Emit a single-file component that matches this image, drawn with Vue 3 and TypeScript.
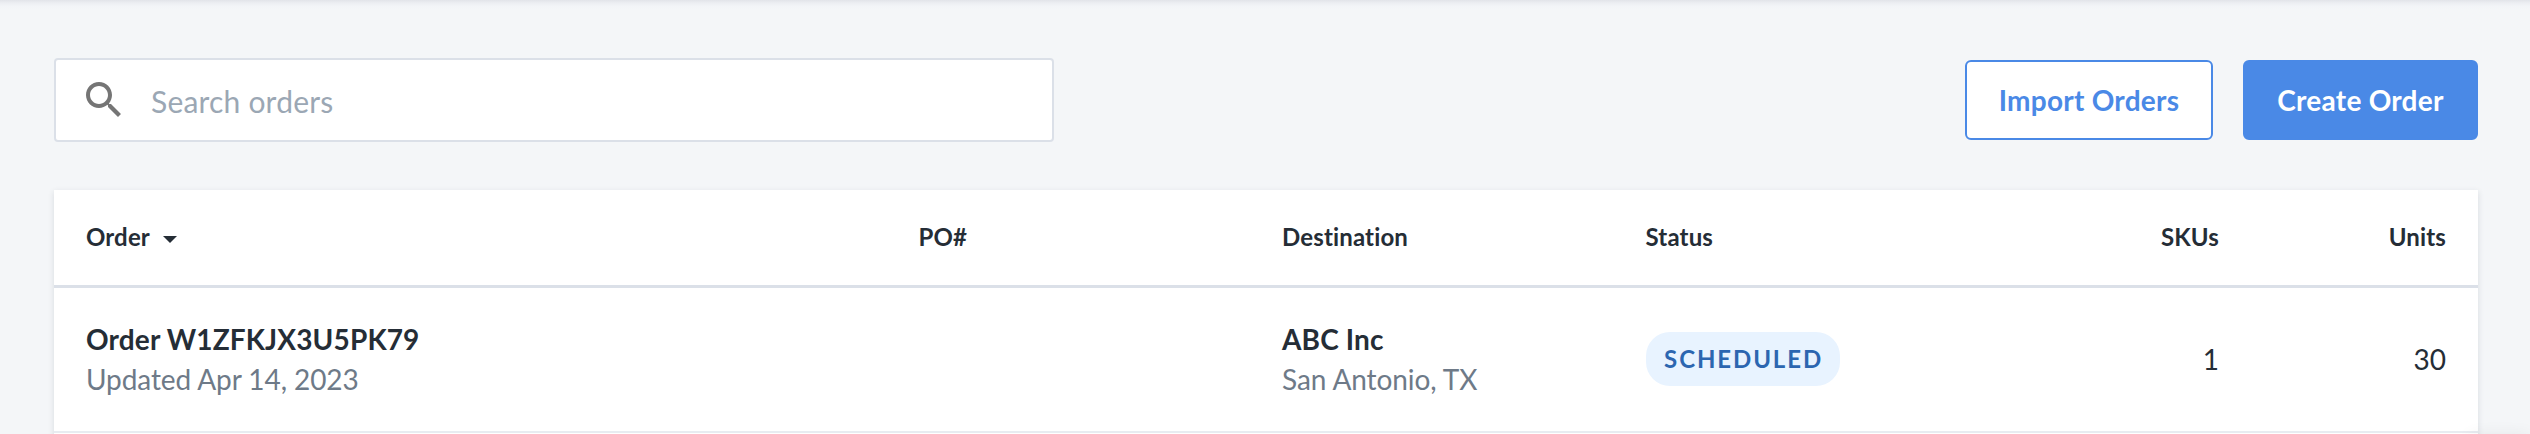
<script setup lang="ts">
interface OrderRow {
  name: string
  updated: string
  po: string
  company: string
  city: string
  status: string
  skus: number
  units: number
}

const orders: OrderRow[] = [
  {
    name: 'Order W1ZFKJX3U5PK79',
    updated: 'Updated Apr 14, 2023',
    po: '',
    company: 'ABC Inc',
    city: 'San Antonio, TX',
    status: 'SCHEDULED',
    skus: 1,
    units: 30,
  },
]
</script>

<template>
  <main class="page">
    <div class="toolbar">
      <label class="search">
        <svg class="search-icon" viewBox="0 0 24 24" aria-hidden="true">
          <path
            d="M15.5 14h-.79l-.28-.27C15.41 12.59 16 11.11 16 9.5 16 5.91 13.09 3 9.5 3S3 5.91 3 9.5 5.91 16 9.5 16c1.61 0 3.09-.59 4.23-1.57l.27.28v.79l5 4.99L20.49 19l-4.99-5zm-6 0C7.01 14 5 11.99 5 9.5S7.01 5 9.5 5 14 7.01 14 9.5 11.99 14 9.5 14z"
          />
        </svg>
        <input class="search-input" type="text" placeholder="Search orders" />
      </label>
      <div class="actions">
        <button class="btn import">Import Orders</button>
        <button class="btn create">Create Order</button>
      </div>
    </div>

    <section class="card">
      <div class="row head">
        <div class="cell sortable">
          Order
          <svg class="caret" viewBox="0 0 14 7" aria-hidden="true"><path d="M0 0h14L7 7z" /></svg>
        </div>
        <div class="cell">PO#</div>
        <div class="cell">Destination</div>
        <div class="cell">Status</div>
        <div class="cell num">SKUs</div>
        <div class="cell num">Units</div>
      </div>
      <div v-for="order in orders" :key="order.name" class="row body">
        <div class="cell">
          <div class="primary">{{ order.name }}</div>
          <div class="secondary">{{ order.updated }}</div>
        </div>
        <div class="cell">{{ order.po }}</div>
        <div class="cell">
          <div class="primary">{{ order.company }}</div>
          <div class="secondary">{{ order.city }}</div>
        </div>
        <div class="cell"><span class="badge">{{ order.status }}</span></div>
        <div class="cell num">{{ order.skus }}</div>
        <div class="cell num">{{ order.units }}</div>
      </div>
    </section>
    <div class="corner-shadow"></div>
  </main>
</template>

<style>
body {
  margin: 0;
  background: #f4f6f8;
  overflow: hidden;
}
</style>

<style scoped>
.page {
  position: relative;
  box-sizing: border-box;
  height: 434px;
  padding: 58px 52px 0 54px;
  overflow: hidden;
  background: linear-gradient(#e2e4e9 0, #eceef2 3px, #f2f4f7 6px, #f4f6f8 9px);
  color: #252d36;
  font-family: Lato, "Open Sans", sans-serif;
  font-variant-ligatures: none;
}
.toolbar {
  display: flex;
  align-items: center;
  justify-content: space-between;
  height: 84px;
  margin-bottom: 48px;
}
.search {
  display: flex;
  align-items: center;
  box-sizing: border-box;
  width: 1000px;
  height: 84px;
  padding: 0 24px;
  border: 2px solid #dbe0e8;
  border-radius: 4px;
  background: #fff;
}
.search-icon {
  width: 48px;
  height: 48px;
  flex: none;
  fill: #757575;
}
.search-input {
  flex: 1;
  height: 60px;
  margin: 2px 0 0 23px;
  padding: 0;
  border: 0;
  outline: 0;
  background: transparent;
  font: 400 30px/40px Lato, "Open Sans", sans-serif;
  letter-spacing: 0.2px;
}
.search-input::placeholder {
  color: #9ba7b4;
  opacity: 1;
}
.actions {
  display: flex;
  gap: 30px;
}
.btn {
  box-sizing: border-box;
  height: 80px;
  padding: 0;
  border: 2px solid #4a89e6;
  border-radius: 6px;
  font: 700 28px/40px Lato, "Open Sans", sans-serif;
  letter-spacing: 0.25px;
}
.import {
  width: 248px;
  background: #fff;
  color: #4a89e6;
}
.create {
  width: 235px;
  background: #4a89e6;
  color: #fff;
}
.card {
  height: 300px;
  background: #fff;
  box-shadow: 0 2px 6px rgba(40, 50, 70, 0.14);
}
.row {
  display: grid;
  grid-template-columns: 832.4px 363.6px 363.6px 410.4px 227px 227px;
  align-items: center;
  box-sizing: border-box;
}
.cell {
  padding: 0 32px;
}
.head {
  height: 98px;
  padding-bottom: 1px;
  border-bottom: 3px solid #dbe0e8;
  font-size: 24px;
  font-weight: 700;
  line-height: 32px;
  letter-spacing: 0.15px;
}
.body {
  height: 145px;
  padding-bottom: 2px;
  border-bottom: 2px solid #e8ecf1;
  font-size: 28px;
  line-height: 40px;
}
.sortable {
  display: flex;
  align-items: center;
}
.caret {
  width: 14px;
  height: 7px;
  margin: 4px 0 0 13px;
  fill: #252d36;
}
.num {
  text-align: right;
}
.primary {
  font-weight: 700;
  letter-spacing: 0.15px;
}
.secondary {
  color: #6e7a88;
  letter-spacing: -0.08px;
}
.badge {
  display: flex;
  align-items: center;
  justify-content: center;
  box-sizing: border-box;
  width: 194px;
  height: 54px;
  padding-left: 2px;
  border-radius: 24px;
  background: #e8f3ff;
  color: #2c66b0;
  font-size: 24px;
  font-weight: 700;
  letter-spacing: 1.9px;
}
.corner-shadow {
  position: absolute;
  right: 0;
  bottom: -20px;
  width: 60px;
  height: 20px;
  box-shadow: 0 0 16px rgba(0, 0, 0, 0.06);
}
</style>
